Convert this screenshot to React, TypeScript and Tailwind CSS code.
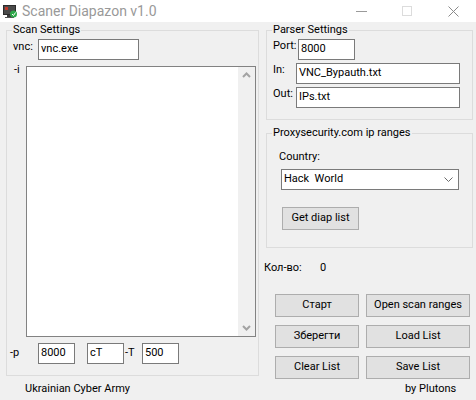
import React from "react";

const font = "font-['Roboto',sans-serif]";

function TextBox({ value, className = "" }: { value: string; className?: string }) {
  return (
    <div className={`h-[21px] bg-white border border-[#7a7a7a] flex items-center pl-[2px] text-black ${className}`}>
      {value}
    </div>
  );
}

function Btn({ children, className = "" }: { children: React.ReactNode; className?: string }) {
  return (
    <button className={`h-[23px] bg-[#e1e1e1] border border-[#adadad] flex items-center justify-center text-black ${className}`}>
      {children}
    </button>
  );
}

function Group({ title, className = "", children }: { title: string; className?: string; children: React.ReactNode }) {
  return (
    <fieldset className={`border border-[#dcdcdc] ${className}`}>
      <legend className="ml-[5px] px-[1px] leading-[14px] text-black">{title}</legend>
      {children}
    </fieldset>
  );
}

function AppIcon() {
  return (
    <svg width="16" height="15" viewBox="0 0 16 15">
      <rect x="1" y="1" width="13" height="10" fill="#2b2b2b" />
      <rect x="2" y="2" width="11" height="8" fill="#4a4a4a" />
      <rect x="3" y="3" width="3" height="3" fill="#c0392b" />
      <rect x="5" y="11" width="5" height="2" fill="#3a3a3a" />
      <rect x="3" y="13" width="9" height="1" fill="#555" />
      <circle cx="11.5" cy="10" r="3.5" fill="#2ea84a" />
      <path d="M10 10 l1.5 1.5 l2 -3" stroke="#fff" strokeWidth="1" fill="none" />
    </svg>
  );
}

export default function App() {
  return (
    <div className={`w-[476px] h-[400px] bg-[#f0f0f0] flex flex-col text-[11px] ${font}`}>
      {/* Title bar */}
      <div className="h-[22px] bg-white flex items-center shrink-0">
        <div className="ml-[2px] w-[16px] flex items-center">
          <AppIcon />
        </div>
        <span className="ml-[4px] text-[14px] text-[#999999]">Scaner Diapazon v1.0</span>
        <div className="ml-auto flex items-center h-full">
          <div className="w-[46px] h-full flex items-center justify-center">
            <div className="w-[11px] h-px bg-[#9a9a9a]" />
          </div>
          <div className="w-[46px] h-full flex items-center justify-center">
            <div className="w-[10px] h-[10px] border border-[#dcdcdc]" />
          </div>
          <div className="w-[46px] h-full flex items-center justify-center">
            <svg width="11" height="11" viewBox="0 0 11 11">
              <path d="M0.5 0.5 L10.5 10.5 M10.5 0.5 L0.5 10.5" stroke="#8a8a8a" strokeWidth="1" />
            </svg>
          </div>
        </div>
      </div>

      {/* Body */}
      <div className="flex pl-[6px]">
        {/* Left column */}
        <div className="w-[253px] flex flex-col">
          <Group title="Scan Settings" className="mt-[1px] h-[353px]">
            <div className="flex items-start pl-[6px] mt-[2px]">
              <span className="w-[25px] leading-[14px] mt-[1px]">vnc:</span>
              <TextBox value="vnc.exe" className="w-[101px]" />
            </div>
            <div className="flex items-start pl-[7px] mt-[6px]">
              <span className="w-[12px] leading-[14px] -mt-[3px]">-i</span>
              <div className="w-[230px] h-[271px] bg-white border border-[#828282] flex justify-end">
                <div className="w-[17px] h-full bg-[#f0f0f0] flex flex-col items-center justify-between py-[5px]">
                  <svg width="9" height="6" viewBox="0 0 9 6">
                    <path d="M1 5 L4.5 1.5 L8 5" stroke="#a3a3a3" strokeWidth="2" fill="none" />
                  </svg>
                  <svg width="9" height="6" viewBox="0 0 9 6">
                    <path d="M1 1 L4.5 4.5 L8 1" stroke="#a3a3a3" strokeWidth="2" fill="none" />
                  </svg>
                </div>
              </div>
            </div>
            <div className="flex items-center pl-[3px] mt-[6px]">
              <span className="w-[28px]">-p</span>
              <TextBox value="8000" className="w-[37px]" />
              <TextBox value="cT" className="w-[37px] ml-[12px]" />
              <span className="w-[18px] pl-[1px]">-T</span>
              <TextBox value="500" className="w-[37px]" />
            </div>
          </Group>
          <div className="mt-[6px] pl-[19px] leading-[14px]">Ukrainian Cyber Army</div>
        </div>

        {/* Right column */}
        <div className="w-[209px] ml-[5px] flex flex-col">
          <Group title="Parser Settings" className="ml-[2px] w-[207px] mt-[1px] h-[97px]">
            <div className="flex items-start pl-[6px] mt-[2px]">
              <span className="w-[25px] leading-[14px]">Port:</span>
              <TextBox value="8000" className="w-[57px]" />
            </div>
            <div className="flex items-start pl-[6px] mt-[3px]">
              <span className="w-[23px] leading-[14px]">In:</span>
              <TextBox value="VNC_Bypauth.txt" className="w-[164px]" />
            </div>
            <div className="flex items-start pl-[6px] mt-[3px]">
              <span className="w-[23px] leading-[14px]">Out:</span>
              <TextBox value="IPs.txt" className="w-[164px]" />
            </div>
          </Group>

          <Group title="Proxysecurity.com ip ranges" className="ml-[2px] w-[207px] mt-[6px] h-[122px]">
            <div className="mt-[10px] pl-[12px] leading-[14px]">Country:</div>
            <div className="mt-[5px] ml-[14px] w-[178px] h-[21px] bg-white border border-[#7a7a7a] flex items-center pl-[2px] pr-[5px]">
              <span className="whitespace-pre">Hack  World</span>
              <svg className="ml-auto" width="9" height="5" viewBox="0 0 9 5">
                <path d="M0.5 0.5 L4.5 4.5 L8.5 0.5" stroke="#6b6b6b" strokeWidth="1" fill="none" />
              </svg>
            </div>
            <Btn className="mt-[17px] ml-[15px] w-[77px]">Get diap list</Btn>
          </Group>

          <div className="mt-[13px] flex leading-[14px]">
            <span className="w-[56px]">Кол-во:</span>
            <span>0</span>
          </div>

          <div className="mt-[19px] ml-[11px] grid grid-cols-[84px_104px] gap-x-[7px] gap-y-[8px]">
            <Btn>Старт</Btn>
            <Btn>Open scan ranges</Btn>
            <Btn>Зберегти</Btn>
            <Btn>Load List</Btn>
            <Btn>Clear List</Btn>
            <Btn>Save List</Btn>
          </div>

          <div className="mt-[3px] pl-[141px] leading-[14px]">by Plutons</div>
        </div>
      </div>
    </div>
  );
}
